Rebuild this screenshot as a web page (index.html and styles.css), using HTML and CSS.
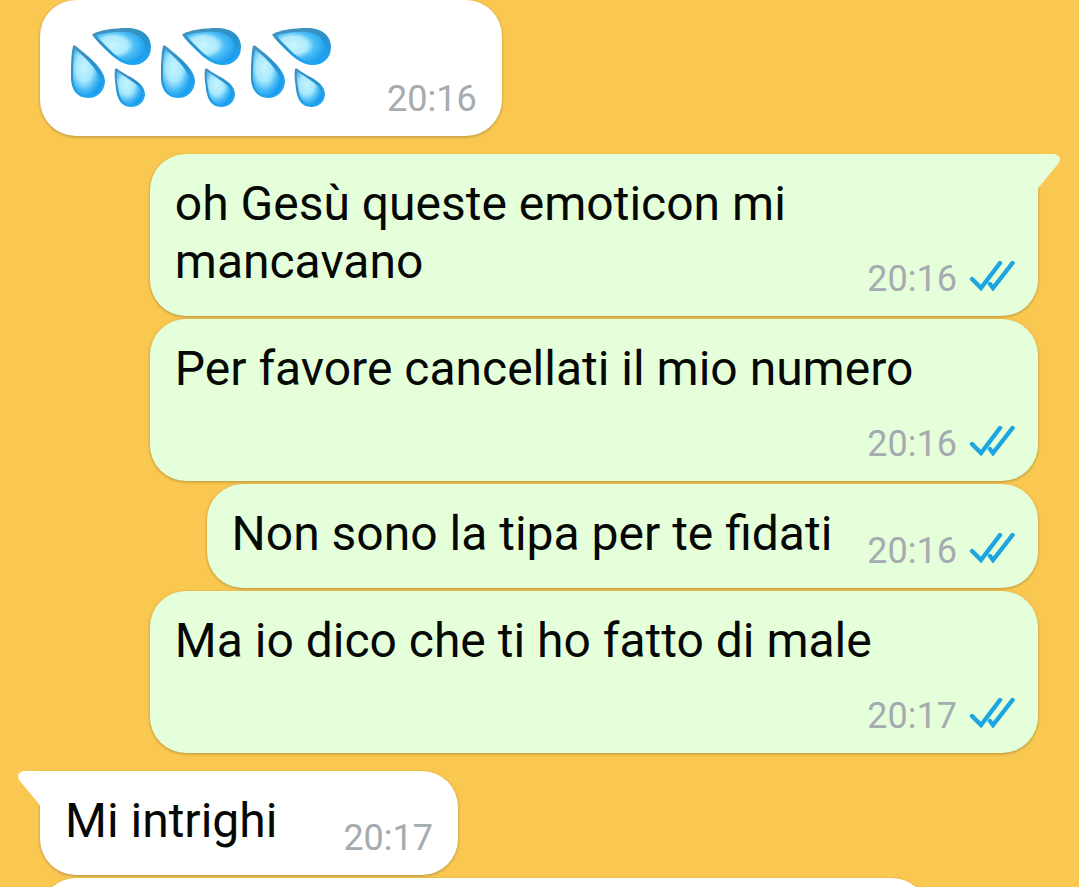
FILE: index.html
```html
<!DOCTYPE html>
<html lang="it">
<head>
  <meta charset="UTF-8" />
  <meta name="viewport" content="width=device-width, initial-scale=1.0"/>
  <title>Chat</title>
  <link rel="stylesheet" href="styles.css">
</head>
<body>
  <!-- Shared shapes -->
  <svg class="defs" aria-hidden="true">
    <defs>
      <linearGradient id="edge" x1="0" y1="0" x2="0.3" y2="1">
        <stop offset="0" stop-color="#4a93b8"/>
        <stop offset="0.5" stop-color="#2791cc"/>
        <stop offset="1" stop-color="#1fa4f0"/>
      </linearGradient>
      <radialGradient id="shine-side" cx="0.35" cy="0.45" r="0.7">
        <stop offset="0" stop-color="#c8f6fe"/>
        <stop offset="0.42" stop-color="#aeeafd"/>
        <stop offset="0.62" stop-color="#4dbff8"/>
        <stop offset="1" stop-color="#1a9cec"/>
      </radialGradient>
      <radialGradient id="shine-down" cx="0.4" cy="0.4" r="0.65">
        <stop offset="0" stop-color="#c4f5fe"/>
        <stop offset="0.45" stop-color="#a8e8fd"/>
        <stop offset="0.75" stop-color="#48b9f6"/>
        <stop offset="1" stop-color="#189dee"/>
      </radialGradient>
      <symbol id="drops" viewBox="0 0 90 90">
        <path fill="url(#edge)" d="M28 13C34 9 50 7 62 7C76 7 86 14 86 26C86 38 77 44 68 44C57 44 48 36 42 30C36 24 30 18 28 15C27 14 27 13 28 13Z"/>
        <path fill="url(#shine-side)" d="M31 14C40 12 52 10 61 11C73 12 80 18 80 27C80 37 74 41 67 41C58 41 49 33 44 28C39 23 34 18 31 14Z"/>
        <path fill="url(#edge)" d="M8 25C9 24 11 25 12 26C18 31 26 37 32 44C37 50 40 55 40 61C39 71 32 77 23 77C12 77 6 68 6 57C6 46 6 34 8 25Z"/>
        <path fill="url(#shine-down)" d="M10 28C17 34 24 40 29 47C34 54 37 59 36 64C34 71 29 75 23 75C13 75 8 66 8 56C8 46 8 36 10 28Z"/>
        <path fill="url(#edge)" d="M50 48C51 47 53 48 54 49C59 53 67 56 73 61C78 65 80 69 80 74C79 82 73 86 66 86C56 86 52 77 51 68C50 60 49 54 50 48Z"/>
        <path fill="url(#shine-down)" d="M52 50C60 56 68 60 73 65C77 70 78 74 76 78C74 82 70 84 65 84C57 83 54 75 53 67C52 61 51 56 52 50Z"/>
      </symbol>
      <symbol id="read" viewBox="0 0 46 30">
        <path fill="none" stroke="#1ba5e1" stroke-width="4.4" stroke-linecap="round" d="M3 18L12 27L31 2M21 23L24 27L43.5 2"/>
      </symbol>
    </defs>
  </svg>

  <main class="chat">
    <div class="group incoming">
      <article class="bubble emoji">
        <span class="drops" role="img" aria-label="Gocce di sudore">
          <svg><use href="#drops"/></svg><svg><use href="#drops"/></svg><svg><use href="#drops"/></svg>
        </span>
        <span class="meta"><time>20:16</time></span>
      </article>
    </div>

    <div class="group outgoing">
      <article class="bubble first">
        <svg class="tail" viewBox="0 0 22 34" aria-hidden="true"><path d="M0 0H15C21 0 24 5 20 10L1 33V34H0Z"/></svg>
        oh Gesù queste emoticon mi mancavano
        <span class="meta"><time>20:16</time><svg class="ticks" role="img" aria-label="Letto"><use href="#read"/></svg></span>
      </article>
      <article class="bubble">
        Per favore cancellati il mio numero
        <span class="meta"><time>20:16</time><svg class="ticks" role="img" aria-label="Letto"><use href="#read"/></svg></span>
      </article>
      <article class="bubble">
        Non sono la tipa per te fidati
        <span class="meta"><time>20:16</time><svg class="ticks" role="img" aria-label="Letto"><use href="#read"/></svg></span>
      </article>
      <article class="bubble">
        Ma io dico che ti ho fatto di male
        <span class="meta"><time>20:17</time><svg class="ticks" role="img" aria-label="Letto"><use href="#read"/></svg></span>
      </article>
    </div>

    <div class="group incoming">
      <article class="bubble first">
        <svg class="tail" viewBox="0 0 22 34" aria-hidden="true"><path d="M22 0H7C1 0 -2 5 2 10L21 33V34H22Z"/></svg>
        Mi intrighi
        <span class="meta"><time>20:17</time></span>
      </article>
      <article class="bubble next"></article>
    </div>
  </main>
</body>
</html>
```
FILE: styles.css
```css
:root {
  --wall: #fac750;
  --sent: #e5ffdb;
  --received: #fff;
  --time: #a5abae;
  --radius: 36px;
  --shadow: 0 1px 3px rgba(70, 70, 40, 0.4);
}

* {
  box-sizing: border-box;
}

body {
  margin: 0;
  background: var(--wall);
  color: #050805;
  font-family: Roboto, sans-serif;
  font-size: 48px;
  line-height: 58px;
}

.defs {
  position: absolute;
  width: 0;
  height: 0;
}

.chat {
  display: flex;
  flex-direction: column;
  gap: 18px;
  height: 100vh;
  padding: 0 41px 0 40px;
  overflow: hidden;
}

.group {
  display: flex;
  flex-direction: column;
  align-items: flex-start;
  gap: 3px;
}

.outgoing {
  align-items: flex-end;
}

/* Bubbles */
.bubble {
  display: flow-root;
  position: relative;
  max-width: 89%;
  padding: 21px 25px 16px;
  border-radius: var(--radius);
  background: var(--received);
  box-shadow: var(--shadow);
}

.outgoing .bubble {
  padding-right: 23px;
  background: var(--sent);
}

.incoming .first {
  border-top-left-radius: 0;
}

.outgoing .first {
  border-top-right-radius: 0;
}

.next {
  width: 89%;
  min-height: 104px;
}

.tail {
  position: absolute;
  top: 0;
  width: 22px;
  height: 34px;
  fill: var(--sent);
}

.outgoing .tail {
  left: 100%;
}

.incoming .tail {
  right: 100%;
  fill: var(--received);
}

/* Time and read ticks, dropped to a new line when they do not fit */
.meta {
  float: right;
  display: flex;
  align-items: flex-start;
  gap: 12px;
  margin: 25px 0 0 35px;
  color: var(--time);
  font-size: 36px;
  line-height: 42px;
}

.incoming .meta {
  margin-left: 66px;
}

.ticks {
  width: 46px;
  height: 30px;
  margin-top: 3px;
}

/* Emoji message */
.emoji {
  display: flex;
  align-items: flex-end;
}

.incoming .emoji .meta {
  margin-left: 52px;
}

.drops {
  display: flex;
}

.drops svg {
  width: 90px;
  height: 90px;
  margin-bottom: 9px;
}
```
